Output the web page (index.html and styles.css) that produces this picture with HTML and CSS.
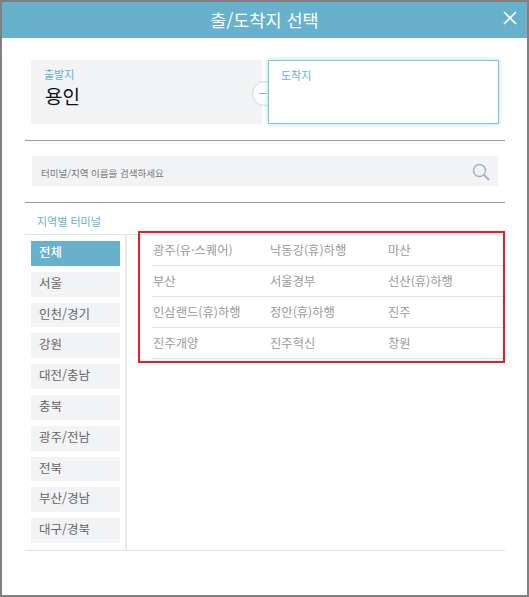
FILE: index.html
```html
<!DOCTYPE html>
<html lang="ko">
<head>
<meta charset="utf-8">
<title>출/도착지 선택</title>
<link rel="stylesheet" href="styles.css">
</head>
<body>
<div class="modal">
  <header class="head">
    <h1 class="title">출/도착지 선택</h1>
    <svg class="close" width="16" height="16" viewBox="0 0 16 16"><path d="M2 2L14 14M14 2L2 14" stroke="#fff" stroke-width="1.6" fill="none"/></svg>
  </header>
  <div class="route">
    <div class="place from">
      <div class="place-label">출발지</div>
      <div class="place-name">용인</div>
      <span class="swap"><svg width="25" height="25" viewBox="0 0 25 25"><circle cx="12.5" cy="12.5" r="12" fill="#fff" stroke="#d5d5d5"/><path d="M7 12.5H19M15.5 9.5L19 12.5L15.5 15.5" stroke="#a9a9a9" fill="none"/></svg></span>
    </div>
    <div class="place to">
      <div class="place-label">도착지</div>
    </div>
  </div>
  <div class="search">
    <span class="search-text">터미널/지역 이름을 검색하세요</span>
    <svg width="18" height="18" viewBox="0 0 18 18"><circle cx="7.5" cy="7.5" r="6" fill="none" stroke="#aeaeba" stroke-width="1.5"/><path d="M12 12L17 17" stroke="#aeaeba" stroke-width="1.8"/></svg>
  </div>
  <div class="region-title">지역별 터미널</div>
  <div class="panel">
    <ul class="regions">
      <li class="region active">전체</li>
      <li class="region">서울</li>
      <li class="region">인천/경기</li>
      <li class="region">강원</li>
      <li class="region">대전/충남</li>
      <li class="region">충북</li>
      <li class="region">광주/전남</li>
      <li class="region">전북</li>
      <li class="region">부산/경남</li>
      <li class="region">대구/경북</li>
    </ul>
    <div class="terminals">
      <span class="cell">광주(유·스퀘어)</span><span class="cell">낙동강(휴)하행</span><span class="cell">마산</span>
      <span class="cell">부산</span><span class="cell">서울경부</span><span class="cell">선산(휴)하행</span>
      <span class="cell">인삼랜드(휴)하행</span><span class="cell">정안(휴)하행</span><span class="cell">진주</span>
      <span class="cell">진주개양</span><span class="cell">진주혁신</span><span class="cell">창원</span>
    </div>
    <div class="highlight"></div>
  </div>
</div>
</body>
</html>
```
FILE: styles.css
```css
* { box-sizing: border-box; }
html, body { margin: 0; padding: 0; background: #fff; }
body { width: 529px; height: 597px; overflow: hidden; font-family: "Noto Sans CJK KR", "Noto Sans", sans-serif; }
.modal { width: 529px; height: 597px; border: 2px solid #808080; background: #fff; }
.head { height: 36px; background: #67b1cd; display: flex; align-items: center; justify-content: center; position: relative; }
.title { margin: 0; font-size: 17.5px; font-weight: 400; color: #fff; line-height: 36px; }
.close { position: absolute; right: 9px; top: 8px; }
.route { display: flex; gap: 6px; margin: 22px 0 0 29px; padding-bottom: 16px; width: 474px; }
.place { width: 231px; height: 64px; padding: 7px 13px; position: relative; }
.from { background: #f2f3f5; }
.to { background: #fff; border: 1px solid #7cc4e2; box-shadow: 0 0 5px #a8dcf0; z-index: 1; padding: 7px 12px; }
.place-label { font-size: 11px; line-height: 15px; color: #67b1cd; }
.place-name { margin-top: 2px; font-size: 19px; line-height: 24px; color: #111; padding-left: 1px; }
.swap { position: absolute; left: 221px; top: 21px; width: 25px; height: 25px; display: block; }
.swap svg { display: block; }
.search { display: flex; border-top: 1px solid #999; border-bottom: 1px solid #999; width: 480px; margin-left: 23px; height: 63px; padding: 15px 7px; position: relative; }
.search-text { flex: 1; background: #f2f3f5; height: 30px; line-height: 34px; padding-left: 9px; font-size: 9.5px; color: #777; }
.search svg { position: absolute; right: 15px; top: 22px; }
.region-title { margin-left: 35px; height: 31px; padding-top: 10px; font-size: 11px; line-height: 16px; color: #67b1cd; }
.panel { position: relative; margin-left: 23px; width: 480px; height: 317px; border-top: 1px solid #e4e4e4; border-bottom: 1px solid #e4e4e4; display: flex; }
.regions { list-style: none; margin: 0; padding: 6px 6px 0; width: 102px; border-right: 2px solid #e8e8e8; display: flex; flex-direction: column; gap: 6px; }
.region { height: 24.8px; width: 89px; flex: none; background: #f2f3f5; padding-left: 8px; font-size: 12.5px; line-height: 22px; color: #666; }
.active { background: #67b1cd; color: #fff; font-weight: 500; }
.terminals { margin-left: 25px; width: 352px; display: grid; grid-template-columns: repeat(3, 118px); grid-auto-rows: 31px; align-content: start; }
.cell { height: 31px; border-bottom: 1px solid #e4e4e4; font-size: 12.3px; line-height: 30px; color: #999; }
.cell:nth-child(3n+1) { text-indent: 1px; }
.highlight { position: absolute; left: 113px; top: -4px; width: 367px; height: 132px; border: 2px solid #ed1c24; }
```
